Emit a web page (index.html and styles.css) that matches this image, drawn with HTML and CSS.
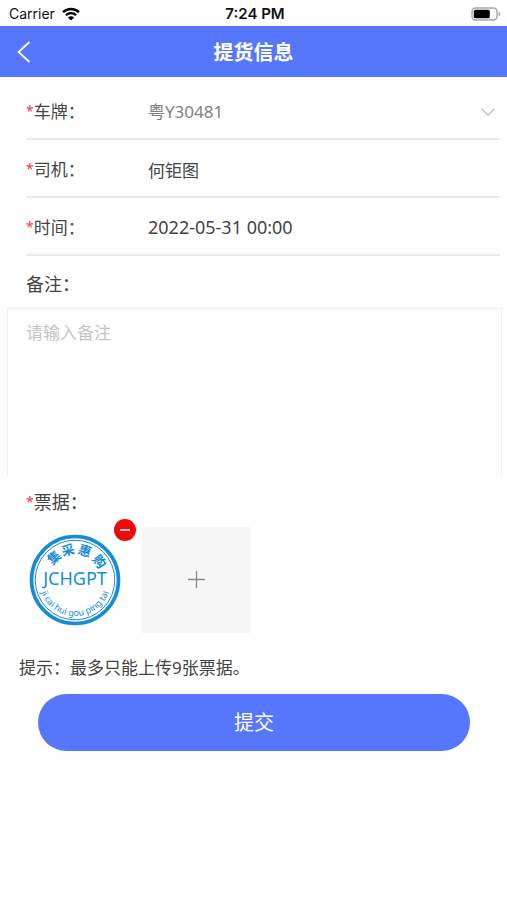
FILE: index.html
```html
<!DOCTYPE html>
<html lang="zh-CN">
<head>
    <meta charset="UTF-8">
    <meta name="viewport" content="width=device-width, initial-scale=1.0">
    <title>提货信息</title>
    <link rel="stylesheet" href="styles.css">
</head>
<body>

    <!-- Status bar -->
    <div class="status-bar">
        <div class="carrier">
            <span>Carrier</span>
            <svg width="20" height="14" viewBox="0 0 18 14">
                <path d="M1 5.2a11.4 11.4 0 0 1 16 0" fill="none" stroke="#000" stroke-width="2.5"/>
                <path d="M3.9 8.3a7.3 7.3 0 0 1 10.2 0" fill="none" stroke="#000" stroke-width="2.3"/>
                <path d="M9 13.6L5.9 10.5a4.4 4.4 0 0 1 6.2 0z"/>
            </svg>
        </div>
        <div class="clock">7:24 PM</div>
        <div class="battery">
            <svg width="30" height="14" viewBox="0 0 30 14">
                <rect x="1" y="1" width="25" height="12" rx="3.5" fill="none" stroke="#a6a6a6" stroke-width="1.4"/>
                <rect x="2.8" y="2.8" width="16" height="8.4" rx="1.5"/>
                <path d="M27.6 4.6c2.3 .8 2.3 4 0 4.8z" fill="#a6a6a6"/>
            </svg>
        </div>
    </div>

    <!-- Title bar -->
    <header class="nav-bar">
        <button class="back" type="button" aria-label="返回">
            <svg width="14" height="22" viewBox="0 0 14 22">
                <path d="M12.500 1L1.500 11l11 10" fill="none" stroke="#fff" stroke-width="1.8"/>
            </svg>
        </button>
        <h1>提货信息</h1>
    </header>

    <form class="pickup-form">
        <div class="fields">
            <div class="row">
                <label for="plate"><span class="star">*</span>车牌：</label>
                <select id="plate" class="plate">
                    <option>粤Y30481</option>
                </select>
                <svg class="arrow" width="14" height="9" viewBox="0 0 14 9">
                    <path d="M1 1l6 6.2L13 1" fill="none" stroke="#c0c0c0" stroke-width="1.3"/>
                </svg>
            </div>
            <div class="row">
                <label for="driver"><span class="star">*</span>司机：</label>
                <input id="driver" type="text" value="何钜图">
            </div>
            <div class="row">
                <label for="time"><span class="star">*</span>时间：</label>
                <input id="time" class="time" type="text" value="2022-05-31 00:00">
            </div>
        </div>

        <label class="remark-label" for="remark">备注：</label>
        <textarea id="remark" placeholder="请输入备注"></textarea>

        <div class="bill-label"><span class="star">*</span>票据：</div>
        <div class="bills">
            <div class="bill">
                <!-- Company seal -->
                <svg class="seal" viewBox="0 0 92 92">
                    <defs>
                        <path id="seal-bottom" d="M10 46a36 36 0 0 0 72 0"/>
                    </defs>
                    <g fill="none" stroke="#168bd8">
                        <circle cx="46" cy="46" r="43.5" stroke-width="3.6"/>
                        <circle cx="46" cy="46" r="39.8" stroke-width="1"/>
                    </g>
                    <g class="seal-top">
                        <text x="46" y="20" transform="rotate(-43 46 46)">集</text>
                        <text x="46" y="20" transform="rotate(-13 46 46)">采</text>
                        <text x="46" y="20" transform="rotate(19 46 46)">惠</text>
                        <text x="46" y="20" transform="rotate(53 46 46)">购</text>
                    </g>
                    <text class="seal-name" x="46" y="51">JCHGPT</text>
                    <text class="seal-pinyin"><textPath href="#seal-bottom" startOffset="50%">ji cai hui gou ping tai</textPath></text>
                </svg>
                <button class="remove" type="button" aria-label="删除">
                    <svg width="22" height="22" viewBox="0 0 22 22">
                        <path d="M6 11h10" stroke="#fff" stroke-width="1.5"/>
                    </svg>
                </button>
            </div>
            <button class="add" type="button" aria-label="上传票据">
                <svg width="18" height="18" viewBox="0 0 18 18">
                    <path d="M9.500 0v17M1 8.500h17" stroke="#888" stroke-width="1.3"/>
                </svg>
            </button>
        </div>

        <p class="tip">提示：最多只能上传9张票据。</p>
        <button class="submit" type="submit">提交</button>
    </form>

</body>
</html>
```
FILE: styles.css
```css
* {
    box-sizing: border-box;
}
body {
    margin: 0;
    background: #fff;
    color: #444;
    font-family: "Noto Sans", "Noto Sans CJK SC", sans-serif;
    font-size: 17px;
    line-height: 24px;
}
button,
input,
select,
textarea {
    margin: 0;
    padding: 0;
    border: 0;
    outline: 0;
    background: none;
    color: inherit;
    font: inherit;
}
svg {
    display: block;
}
.status-bar {
    display: grid;
    grid-template-columns: 1fr auto 1fr;
    align-items: center;
    height: 26px;
    padding: 1px 6px 0 9px;
    color: #111;
    font-family: Inter, sans-serif;
    font-size: 14px;
}
.carrier {
    display: flex;
    align-items: center;
    gap: 6px;
}
.clock {
    font-size: 15px;
    font-weight: 600;
}
.battery {
    justify-self: end;
}
.nav-bar {
    display: grid;
    grid-template-columns: 48px 1fr 48px;
    align-items: center;
    height: 51px;
    background: #5677fc;
    color: #fff;
}
.nav-bar h1 {
    margin: 0;
    padding-top: 2px;
    font-size: 20px;
    font-weight: bold;
    text-align: center;
}
.back {
    padding-left: 17px;
}
.fields {
    padding: 5px 7px 0 26px;
}
.row {
    display: flex;
    align-items: center;
    height: 58px;
    padding-top: 4px;
    border-bottom: 2px solid #ececec;
}
.row label {
    width: 122px;
}
.row input,
.row select {
    flex: 1;
    min-width: 0;
    height: 40px;
}
.row input {
    padding-bottom: 2px;
}
.row .plate {
    appearance: none;
    color: #808080;
}
.row .time {
    font-size: 18px;
}
.arrow {
    margin-right: 5px;
}
.star {
    color: #f0384a;
    font-size: 14px;
    line-height: 14px;
    vertical-align: 2px;
}
.remark-label {
    display: block;
    padding: 16px 26px 12px;
    font-size: 18px;
}
textarea {
    display: block;
    width: calc(100% - 12px);
    height: 167px;
    margin: 0 5px 0 7px;
    padding: 12px 18px;
    border: 1px solid #f0f0f0;
    border-bottom: 0;
    resize: none;
}
textarea::placeholder {
    color: #c4c4c4;
}
.bill-label {
    padding: 15px 26px 13px;
    font-size: 18px;
}
.bills {
    display: flex;
    gap: 11px;
    padding: 0 20px;
}
.bill {
    position: relative;
    display: flex;
    align-items: center;
    justify-content: center;
    width: 110px;
    height: 106px;
}
.seal {
    width: 92px;
    height: 92px;
}
.seal text {
    fill: #168bd8;
    text-anchor: middle;
}
.seal-top {
    font-family: "Noto Sans CJK SC", sans-serif;
    font-size: 13px;
    font-weight: bold;
}
.seal-name {
    font-size: 18px;
}
.seal-pinyin {
    font-size: 9px;
}
.remove {
    position: absolute;
    top: -8px;
    right: -6px;
    width: 22px;
    height: 22px;
    border-radius: 50%;
    background: #ee0a0a;
}
.add {
    display: flex;
    align-items: center;
    justify-content: center;
    width: 110px;
    height: 106px;
    background: #f7f7f7;
}
.tip {
    margin: 0;
    padding: 23px 19px 14px;
}
.submit {
    display: block;
    width: calc(100% - 75px);
    height: 57px;
    margin: 0 37px 0 38px;
    border-radius: 29px;
    background: #5677fc;
    color: #fff;
    font-size: 20px;
}
```
